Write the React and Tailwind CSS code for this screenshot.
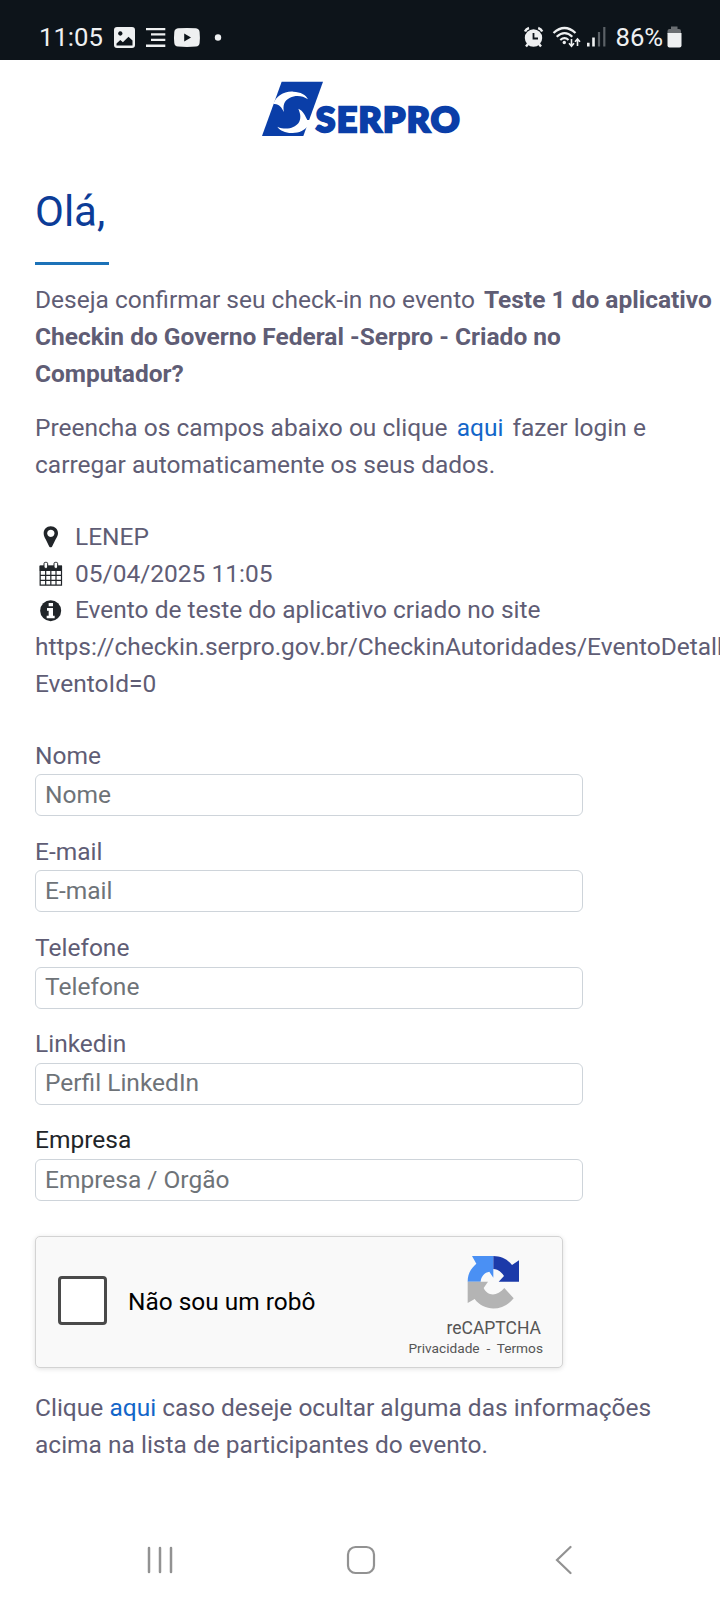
import React from "react";

function StatusBar() {
  return (
    <header className="flex h-[60px] items-start bg-[#0d141a] text-[#eef0f1]">
      <div className="mt-[20px] ml-[39px] w-[66px] text-[25.7px] leading-[34px]">11:05</div>
      <svg className="mt-[20px] ml-[7px] h-[34px] w-[112px]" viewBox="112 20 112 34" fill="#eef0f1">
        <path fillRule="evenodd" d="M117 27h15a3 3 0 0 1 3 3v15a3 3 0 0 1-3 3h-15a3 3 0 0 1-3-3v-15a3 3 0 0 1 3-3ZM120.300 31.300a2.200 2.200 0 1 0 .01 0ZM116.500 43.500v2h16v-5l-4-3.800-5.600 5.600-2.600-2.400Z" />
        <path d="M146 28h19.300v2.300H146zM151 33.300h14.300v2.300H151zM151 38.800h14.300v2.300H151zM146 44.500h19.300v2.500H146z" />
        <path fillRule="evenodd" d="M178 28.300q9-.8 18 0 3.300.4 3.600 3.700.6 5.500 0 11-.4 3.300-3.600 3.600-9 .8-18 0-3.400-.3-3.700-3.600-.6-5.500 0-11 .3-3.300 3.700-3.700ZM184.200 33.500v8l6.800-4Z" />
        <circle cx="218" cy="37.500" r="3.200" />
      </svg>
      <svg className="mt-[20px] ml-[296px] h-[34px] w-[88px]" viewBox="520 20 88 34" fill="none" stroke="#eef0f1">
        <circle cx="533.500" cy="38" r="8.700" fill="#eef0f1" stroke="none" />
        <path d="M533.500 33v5.500h4.500" stroke="#0d141a" strokeWidth="1.800" />
        <path d="M525 31.500q1-2.500 4-3.500M538.200 28q3 1 4 3.500" strokeWidth="2.400" />
        <path d="M528 44l-2 2.500M539 44l2 2.500" strokeWidth="2.400" />
        <path d="M553.500 33q11-10 22 0" strokeWidth="2.300" />
        <path d="M556.700 36.800q8-7.200 15.600 0M560.300 40q4.300-3.600 8.200 0" strokeWidth="2.200" />
        <circle cx="564.300" cy="42.500" r="1.700" fill="#eef0f1" stroke="none" />
        <path d="M571.500 39v7M569 43.300l2.500 2.900 2.500-2.900M577.500 46v-7M575 41.800l2.500-2.900 2.500 2.900" strokeWidth="1.600" />
        <path d="M588.300 46.500v-3.800M593.500 46.500v-9" strokeWidth="2.600" />
        <path d="M599 46.500v-14.500M604.300 46.500v-19.500" stroke="#5b6166" strokeWidth="2.200" />
      </svg>
      <div className="mt-[20px] ml-[7.500px] w-[49.500px] text-[25.700px] leading-[34px] whitespace-nowrap">86%</div>
      <svg className="mt-[20px] ml-[1px] h-[34px] w-[18px]" viewBox="666 20 18 34">
        <path d="M667.500 34v-3q0-2 2-2h1.500v-2.500h6.500v2.500h1.500q2 0 2 2v3z" fill="#6a6e72" />
        <path d="M667.500 33h14v12.500q0 2-2 2h-10q-2 0-2-2z" fill="#eef0f1" />
      </svg>
    </header>
  );
}

function SerproLogo() {
  return (
    <svg className="ml-[260px] h-[60px] w-[204px]" viewBox="30 27 612 180" role="img" aria-label="Serpro">
      <path d="M95 35H219L160 198H36Z" fill="#0a3ea8" />
      <path d="M70 102C78 78 102 63 130 65C152 66 168 74 174 88C158 76 136 75 120 83C102 92 98 106 102 126C94 112 88 100 70 102Z" fill="#fff" />
      <path d="M82 170C108 182 134 174 145 160C154 146 152 132 145 116C160 122 166 138 172 150L186 150L178 163C164 184 144 190 124 189C106 188 90 182 82 170Z" fill="#fff" />
      <text x="197" y="185" textLength="436" lengthAdjust="spacingAndGlyphs" fontFamily="Lato, sans-serif" fontWeight="900" fontSize="103" letterSpacing="4" fill="#0a3ea8" stroke="#0a3ea8" strokeWidth="7">SERPRO</text>
    </svg>
  );
}

function Recaptcha() {
  return (
    <div className="flex h-[132px] w-[528px] rounded-[5px] border-[1.500px] border-[#d3d3d3] bg-[#f9f9f9] shadow-[0_1px_5px_rgba(0,0,0,0.12)]">
      <div className="mt-[39px] ml-[22px] size-[49px] rounded-[4px] border-[3px] border-[#4a4a4a] bg-white" />
      <div className="mt-[47px] ml-[21px] w-[260px] text-[24.450px] leading-[36px] text-black">Não sou um robô</div>
      <div className="flex w-[155px] flex-col items-end text-[#555]">
        <svg className="mt-[18px] mr-[22px] h-[56px] w-[54px]" viewBox="321 108 162 168">
          <path d="M323 188C323 164 333 148 349 134L336 111H400V176L388 158C374 160 363 172 362 188Z" fill="#4a90f4" />
          <path d="M400 111C424 112 442 120 456 138L477 124V188H416L432 171C424 158 412 150 400 150Z" fill="#1c3aa9" />
          <path d="M323 188H384L371 207C382 232 412 233 433 207L461 238C428 279 371 277 344 240L323 252Z" fill="#b4b4b4" />
        </svg>
        <div className="mt-[4.500px] mr-[2px] text-[17.500px] leading-[24px]">reCAPTCHA</div>
        <div className="text-[13.700px] leading-[17.500px] whitespace-pre">Privacidade  -  Termos</div>
      </div>
    </div>
  );
}

const fields = [
  { label: "Nome", placeholder: "Nome" },
  { label: "E-mail", placeholder: "E-mail" },
  { label: "Telefone", placeholder: "Telefone" },
  { label: "Linkedin", placeholder: "Perfil LinkedIn" },
  { label: "Empresa", placeholder: "Empresa / Orgão", dark: true },
];

export default function App() {
  return (
    <div className="flex h-[1600px] w-[720px] flex-col overflow-hidden bg-white font-['Roboto',sans-serif]">
      <StatusBar />
      <main className="flex flex-col pt-[19px] text-[24.500px] leading-[36.700px] text-[#5f5d75]">
        <SerproLogo />
        <div className="flex flex-col items-start pl-[35px] whitespace-nowrap">
          <h1 className="mt-[43px] text-[42px] leading-[60px] text-[#0c3c97]">Olá,</h1>
          <div className="mt-[19.500px] h-[3px] w-[74px] bg-[#1c72b8]" />
          <p className="mt-[17.600px]">
            Deseja confirmar seu check-in no evento <b className="ml-[3px] font-bold">Teste 1 do aplicativo</b>
            <br />
            <b>Checkin do Governo Federal -Serpro - Criado no</b>
            <br />
            <b>Computador?</b>
          </p>
          <p className="mt-[18px]">
            Preencha os campos abaixo ou clique <a className="mx-[3px] text-[#1366c9]">aqui</a> fazer login e
            <br />
            carregar automaticamente os seus dados.
          </p>
          <section className="mt-[35.400px]">
            <div className="flex items-center">
              <svg className="mr-[9px] h-[30px] w-[31px]" viewBox="105 35 93 90">
                <path fillRule="evenodd" d="M152 48C165 48 174 57 174 69C174 76 170 82 167 87L156 109Q152 113 148 109L137 87C134 82 131 76 131 69C131 57 140 48 152 48ZM152 58A11 11 0 1 0 153 58Z" fill="#212529" />
              </svg>
              LENEP
            </div>
            <div className="flex items-center">
              <svg className="mr-[9px] h-[30px] w-[31px]" viewBox="105 145 93 90" fill="none" stroke="#212529">
                <path d="M119 164H186V181H119Z" fill="#212529" stroke="none" />
                <path d="M120.500 166V223.500H184.500V166M120 194H185M120 209H185M137 180V224M152.500 180V224M168 180V224" strokeWidth="3.600" />
                <rect x="132" y="155" width="11" height="18" rx="4" fill="#fff" strokeWidth="3" />
                <rect x="162" y="155" width="11" height="18" rx="4" fill="#fff" strokeWidth="3" />
              </svg>
              05/04/2025 11:05
            </div>
            <div className="flex items-center">
              <svg className="mr-[9px] h-[30px] w-[31px]" viewBox="105 254 93 90">
                <circle cx="152" cy="298" r="31.500" fill="#212529" />
                <path d="M146 275H159V285H146ZM141 290H159V313H164V321H140V313H146V298H141Z" fill="#fff" />
              </svg>
              Evento de teste do aplicativo criado no site
            </div>
            <div>https://checkin.serpro.gov.br/CheckinAutoridades/EventoDetalhes?</div>
            <div>EventoId=0</div>
          </section>
          <form className="mt-[35px] flex flex-col gap-[17.500px]">
            {fields.map((f) => (
              <label key={f.label} className="block">
                <span className={f.dark ? "block text-[#212529]" : "block"}>{f.label}</span>
                <input
                  placeholder={f.placeholder}
                  className="block h-[42px] w-[548px] rounded-[6px] border border-[#ced4da] bg-white px-[9px] pb-[2px] leading-[36px] placeholder:text-[#6e7378]"
                />
              </label>
            ))}
          </form>
          <div className="mt-[35px]">
            <Recaptcha />
          </div>
          <p className="mt-[22px]">
            Clique <a className="text-[#1366c9]">aqui</a> caso deseje ocultar alguma das informações
            <br />
            acima na lista de participantes do evento.
          </p>
        </div>
      </main>
      <nav className="mt-auto flex h-[80px] shrink-0 items-center">
        <svg className="ml-[147px] h-[30px] w-[26px]" viewBox="0 0 26 30" stroke="#929292" strokeWidth="2.500" strokeLinecap="round">
          <path d="M2 3v24M13 3v24M24 3v24" />
        </svg>
        <svg className="ml-[173px] size-[30px]" viewBox="0 0 30 30" fill="none" stroke="#929292" strokeWidth="2.200">
          <rect x="2" y="2" width="26" height="26" rx="7.500" />
        </svg>
        <svg className="ml-[178px] h-[30px] w-[18px]" viewBox="0 0 18 30" fill="none" stroke="#929292" strokeWidth="2.200" strokeLinecap="round">
          <path d="M16.500 2L3 15L16.500 28" />
        </svg>
      </nav>
    </div>
  );
}
